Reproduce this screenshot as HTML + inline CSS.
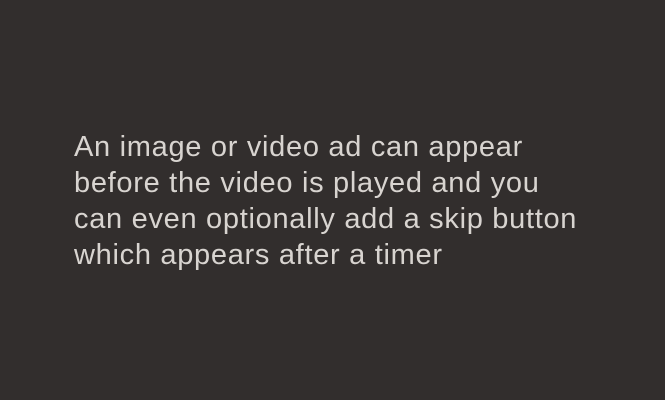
<!DOCTYPE html>
<html><head><style>
html,body{margin:0;padding:0;}
body{width:665px;height:400px;background:#322e2d;position:relative;overflow:hidden;}
p{position:absolute;left:74px;top:129px;margin:0;font-family:"Liberation Sans",sans-serif;font-size:29px;line-height:36px;color:#d8d4d0;white-space:nowrap;letter-spacing:0.7px;}
</style></head><body>
<p>An image or video ad can appear<br>before the video is played and you<br>can even optionally add a skip button<br>which appears after a timer</p>
</body></html>
